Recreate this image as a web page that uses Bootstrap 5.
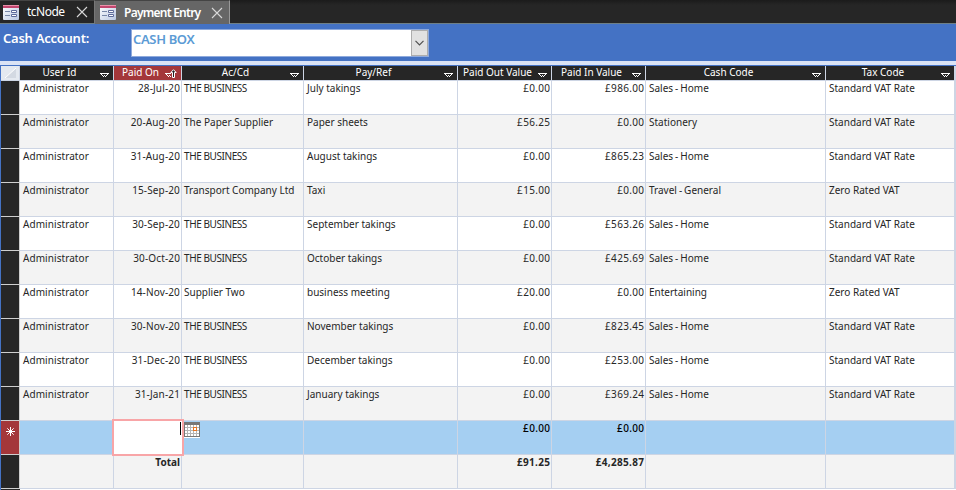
<!DOCTYPE html>
<html lang="en">
<head>
<meta charset="utf-8">
<title>Payment Entry</title>
<link href="https://cdn.jsdelivr.net/npm/bootstrap@5.3.0/dist/css/bootstrap.min.css" rel="stylesheet">
<style>
body{width:956px;height:490px;overflow:hidden;background:#4472c4;font-family:"Noto Sans",sans-serif;line-height:1}
.tabstrip{height:24px;background:linear-gradient(#1b1b1b,#262626 5px);border-bottom:1px solid #6e7f86}
.doc-tab{height:23px;color:#fff;font-size:12px;border-top:1px solid #444}
.doc-tab svg{flex:none}
.doc-tab .shut{margin-right:6px}
.tab-one{width:95px;padding-left:3px;background:#262626;border-right:1px solid #777}
.tab-two{width:135px;height:24px;padding-left:5px;background:#666;border-right:1px solid #999;font-weight:600}
.tab-one .ttl{width:39px;margin-left:8px;letter-spacing:-.5px;white-space:nowrap}
.tab-two .ttl{width:77px;margin-left:8px;letter-spacing:-.75px;white-space:nowrap}
.form-head{height:37px;background:#4472c4}
.acct{width:131px;padding:8px 0 0 3px;color:#fff;font-weight:600;font-size:13px;letter-spacing:-.25px}
.combo{width:298px;height:28px;margin-top:5px;border:1px solid #8faadc;background:#fff;color:#5b9bd5;font-weight:600;font-size:13px}
.combo .val{padding:3px 0 0 1px;letter-spacing:-.35px}
.combo .drop{width:17px;background:#e1e1e1;border:1px solid #adadad}
.rule{height:4px;background:#dae3f5}
.sheet-wrap{height:425px;overflow:hidden}
.sheet{margin-left:1px;width:955px;table-layout:fixed;border-collapse:separate;border-spacing:0;border-top:1px solid #4472c4;font-size:10px;color:#262626;background:#fff}
.sheet th,.sheet td{padding:0;border-right:1px solid #cdd5e4;border-bottom:1px solid #cdd5e4;vertical-align:top;white-space:nowrap;overflow:hidden}
.sheet th{height:15px;background:#262626;color:#fff;font-weight:400;position:relative;text-align:center}
.sheet th .cap{display:block;line-height:13px;padding-right:14px}
.sheet th .arrow{position:absolute;right:4px;top:7px}
.sheet th .sort{position:absolute;right:4px;top:3px}
.sheet th .triangle{position:absolute;right:0;top:0}
.sheet th.sorted{background:#a4373a}
.sheet th.corner{background:#e4e9f0}
.sheet td{height:34px;padding:2px 3px 0 3px;line-height:11px}
.sheet td.num{text-align:right;padding-right:1px}
.sheet tr td.sel{background:#262626;border-color:#cfcfcf;padding:0}
.sheet tr.alt td:not(.sel){background:#f3f3f3}
.sheet tr.fresh td{background:#a5cff2;color:#000;font-weight:500}
.sheet tr.fresh td.sel{background:#a4373a}
.sheet tr.fresh td.edit{background:#fff;overflow:visible;position:relative;padding:0}
.edit-box{position:absolute;left:-2px;top:-2px;width:72px;height:37px;border:2px solid #f8a5a7;background:#fff}
.caret{position:absolute;right:1px;top:1px;width:1px;height:13px;background:#000}
.sheet tr.fresh td.picker{padding:1px 0 0 2px}
.sheet tr.total td:not(.sel){background:#f3f3f3;font-weight:700}
.sheet tr.stub td{height:2px;border:0}
.c0{letter-spacing:.07px}.c1{letter-spacing:.14px}.c4,.c5{letter-spacing:.32px;margin-right:-.32px}
.c2{margin-left:-1px}.c2.up{letter-spacing:-.42px}
.c6{word-spacing:-.6px}
</style>
<script src="https://cdn.jsdelivr.net/npm/bootstrap@5.3.0/dist/js/bootstrap.bundle.min.js"></script>
</head>
<body>
<svg width="0" height="0" class="position-absolute">
<defs>
<linearGradient id="pg" x2="1" y2="1"><stop stop-color="#fff"/><stop offset="1" stop-color="#b9c7e2"/></linearGradient>
<symbol id="form" viewBox="0 0 16 15"><rect width="16" height="15" rx="1" fill="url(#pg)"/><path d="M0 0h16v3H0z" fill="#c3466f"/><path d="M0 .5h16" stroke="#e991aa"/><path d="M2 6.5h5M2 10.5h5" stroke="#7787a8"/><path d="M8.5 5.5h5v2h-5zM8.5 9.5h5v2h-5z" fill="#fff" stroke="#5e6b9b"/></symbol>
<symbol id="close" viewBox="0 0 12 12"><path d="M1 1l10 10M11 1L1 11" stroke="#d8d8d8" stroke-width="1.1" fill="none"/></symbol>
<symbol id="arr" viewBox="0 0 9 4"><path d="M0 .5h9M1 1.5h1M7 1.5h1M2 2.5h1M4 2.5h1M6 2.5h1M3 3.5h1M5 3.5h1" stroke="#fff" shape-rendering="crispEdges"/></symbol>
</defs>
</svg>
<nav class="tabstrip d-flex">
<div class="doc-tab tab-one d-flex align-items-center"><svg width="16" height="15"><use href="#form"/></svg><span class="ttl">tcNode</span><svg class="shut ms-auto" width="12" height="12"><use href="#close"/></svg></div>
<div class="doc-tab tab-two d-flex align-items-center"><svg width="16" height="15"><use href="#form"/></svg><span class="ttl">Payment Entry</span><svg class="shut ms-auto" width="12" height="12"><use href="#close"/></svg></div>
</nav>
<header class="form-head d-flex">
<div class="acct">Cash Account:</div>
<div class="combo d-flex justify-content-between"><span class="val">CASH BOX</span><span class="drop d-flex align-items-center justify-content-center"><svg width="9" height="6"><path d="M.5 .8l4 4 4-4" fill="none" stroke="#505050" stroke-width="1.2"/></svg></span></div>
</header>
<div class="rule"></div>
<div class="sheet-wrap">
<table class="sheet">
<colgroup><col style="width:19px"><col style="width:94px"><col style="width:68px"><col style="width:122px"><col style="width:154px"><col style="width:94px"><col style="width:94px"><col style="width:180px"><col style="width:129px"><col></colgroup>
<thead><tr id="head"></tr></thead>
<tbody id="rows"></tbody>
</table>
</div>
<script>
const heads=["User Id","Paid On","Ac/Cd","Pay/Ref","Paid Out Value","Paid In Value","Cash Code","Tax Code"];
const S="Standard VAT Rate",Z="Zero Rated VAT",B="THE BUSINESS",H="Sales - Home";
const data=[
["28-Jul-20",B,"July takings","£0.00","£986.00",H,S],
["20-Aug-20","The Paper Supplier","Paper sheets","£56.25","£0.00","Stationery",S],
["31-Aug-20",B,"August takings","£0.00","£865.23",H,S],
["15-Sep-20","Transport Company Ltd","Taxi","£15.00","£0.00","Travel - General",Z],
["30-Sep-20",B,"September takings","£0.00","£563.26",H,S],
["30-Oct-20",B,"October takings","£0.00","£425.69",H,S],
["14-Nov-20","Supplier Two","business meeting","£20.00","£0.00","Entertaining",Z],
["30-Nov-20",B,"November takings","£0.00","£823.45",H,S],
["31-Dec-20",B,"December takings","£0.00","£253.00",H,S],
["31-Jan-21",B,"January takings","£0.00","£369.24",H,S]];
const arrow='<svg class="arrow" width="9" height="4"><use href="#arr"/></svg>';
const sort='<svg class="sort" width="12" height="9" viewBox="0 0 12 9"><path d="M0 4.5h6M1 5.5h1M2 6.5h1M4 6.5h1M3 7.5h1M5 7.5h1" stroke="#fff" shape-rendering="crispEdges"/><path d="M8.5 .7L5.8 3.5h1.7v5h2v-5h1.7z" fill="#262626" stroke="#fff"/></svg>';
document.getElementById('head').innerHTML='<th class="corner"><svg class="triangle" width="18" height="14"><path d="M15 2v10H4z" fill="#d3d9e2"/><path d="M4 12L15 2" stroke="#fff"/></svg></th>'+heads.map((h,i)=>`<th class="${i==1?'sorted':''}"><span class="cap">${h}</span>${i==1?sort:arrow}</th>`).join('')+'<th></th>';
const cell=(t,i)=>`<td class="${[1,4,5].includes(i)?'num':''}"><span class="c${i} ${t==B?'up':''}">${t}</span></td>`;
document.getElementById('rows').innerHTML=data.map((r,n)=>`<tr class="${n%2?'alt':''}"><td class="sel"></td>${["Administrator",...r].map(cell).join('')}<td></td></tr>`).join('')+
`<tr class="fresh"><td class="sel"><svg class="d-block" width="18" height="30"><path d="M9.5 6v9M5 10.5h9M6.3 7.3l6.4 6.4M12.7 7.3l-6.4 6.4" stroke="#fff"/></svg></td><td></td><td class="edit"><div class="edit-box"><i class="caret"></i></div></td><td class="picker"><svg class="d-block" width="16" height="16" shape-rendering="crispEdges"><path d="M0 0h16v15H0z" fill="#777"/><path d="M0 15h16v1H0z" fill="#fff"/><path d="M1 3h14v11H1z" fill="#fff"/><path d="M3.5 3v11M6.5 3v11M9.5 3v11M12.5 3v11M1 5.5h14M1 8.5h14M1 11.5h14" stroke="#b5b5b5"/><path d="M9.5 5.5h3v3h-3z" fill="#fff" stroke="#e87522"/></svg></td><td></td><td class="num"><span class="c4">£0.00</span></td><td class="num"><span class="c4">£0.00</span></td><td></td><td></td><td></td></tr>
<tr class="total"><td class="sel"></td><td></td><td class="num">Total</td><td></td><td></td><td class="num"><span class="c4">£91.25</span></td><td class="num"><span class="c4">£4,285.87</span></td><td></td><td></td><td></td></tr><tr class="stub"><td class="sel"></td><td colspan="9"></td></tr>`;
</script>
</body>
</html>
